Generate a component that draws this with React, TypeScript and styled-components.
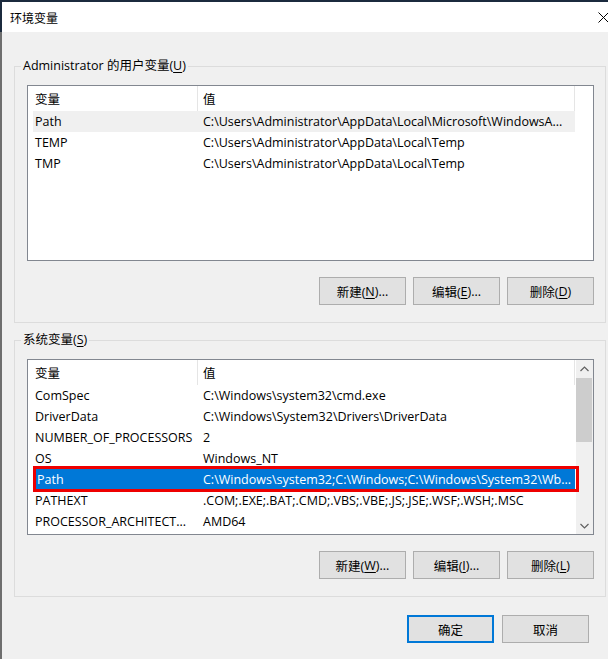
import React from 'react';
import styled, { createGlobalStyle } from 'styled-components';

const Global = createGlobalStyle`
  html, body { margin: 0; padding: 0; background: #f0f0f0; }
  body {
    font-family: "Open Sans", "Noto Sans CJK SC", sans-serif;
    font-size: 12.5px;
    color: #000;
  }
  * { box-sizing: border-box; }
`;

const Window = styled.div`
  width: 608px;
  height: 659px;
  overflow: hidden;
  display: flex;
  flex-direction: column;
  background: #f0f0f0;
  border-top: 2px solid #1b2a3e;
`;

const TitleBar = styled.div`
  height: 30px;
  flex: none;
  background: #fff;
  border-left: 2px solid #1b2a3e;
  display: flex;
  align-items: center;
  justify-content: space-between;
  padding-left: 8px;
  font-family: "Noto Sans CJK SC", sans-serif;
  font-size: 12px;
`;

const CloseIcon = styled.svg`
  width: 11px;
  height: 11px;
  margin-right: -1px;
`;

const Body = styled.div`
  flex: 1;
  display: flex;
  flex-direction: column;
  border-left: 2px solid #6e6e6e;
  padding: 0 2px 0 12px;
`;

const Group = styled.div<{ $top: number }>`
  display: flex;
  flex-direction: column;
  margin-top: ${(p) => p.$top}px;
  border: 1px solid #dcdcdc;
  padding: 0 11px 17px 12px;
`;

const Legend = styled.div`
  align-self: flex-start;
  margin: -9px 0 0 -6px;
  padding: 0 2px;
  height: 16px;
  line-height: 16px;
  background: #f0f0f0;
  white-space: nowrap;
`;

const Mn = styled.span`
  text-decoration: underline;
  text-underline-offset: 2px;
`;

const List = styled.div`
  margin-top: 11px;
  height: 176px;
  border: 1px solid #828790;
  background: #fff;
  display: flex;
  overflow: hidden;
`;

const ListContent = styled.div`
  flex: 1;
  display: flex;
  flex-direction: column;
  min-width: 0;
`;

const Header = styled.div`
  display: flex;
  height: 25px;
  flex: none;
`;

const HeaderCell = styled.div<{ $w: number; $pad: number }>`
  width: ${(p) => p.$w}px;
  padding-left: ${(p) => p.$pad}px;
  border-right: 1px solid #e5e5e5;
  display: flex;
  align-items: center;
  padding-bottom: 1px;
`;

const Row = styled.div<{ $state: 'none' | 'inactive' | 'selected' }>`
  position: relative;
  display: flex;
  align-items: center;
  height: 21px;
  width: 542px;
  margin-left: 5px;
  flex: none;
  background: ${(p) =>
    p.$state === 'selected' ? '#0078d7' : p.$state === 'inactive' ? '#f0f0f0' : 'transparent'};
  color: ${(p) => (p.$state === 'selected' ? '#fff' : '#000')};
`;

const NameCell = styled.div<{ $pad: number }>`
  width: 164px;
  flex: none;
  padding-left: ${(p) => p.$pad}px;
  white-space: nowrap;
  overflow: hidden;
`;

const ValueCell = styled.div`
  flex: 1;
  padding-left: 6px;
  white-space: nowrap;
  overflow: hidden;
`;

const Annotation = styled.div`
  position: absolute;
  left: 0;
  top: -3px;
  right: -4px;
  bottom: -2px;
  border: 3px solid #ee0000;
  pointer-events: none;
`;

const ScrollBar = styled.div`
  width: 17px;
  flex: none;
  background: #f0f0f0;
  display: flex;
  flex-direction: column;
`;

const ScrollArrow = styled.div`
  height: 17px;
  flex: none;
  display: flex;
  align-items: center;
  justify-content: center;
`;

const Track = styled.div`
  flex: 1;
  padding: 1px 1px 0 0;
`;

const Thumb = styled.div`
  height: 64px;
  background: #cdcdcd;
`;

const ButtonRow = styled.div<{ $top: number; $gap: number }>`
  display: flex;
  justify-content: flex-end;
  gap: ${(p) => p.$gap}px;
  margin-top: ${(p) => p.$top}px;
`;

const Button = styled.button<{ $default?: boolean }>`
  width: 87px;
  height: 28px;
  margin: 0;
  padding: 0;
  font: inherit;
  font-size: 12.5px;
  color: #000;
  background: #e1e1e1;
  border: ${(p) => (p.$default ? '2px solid #0078d7' : '1px solid #adadad')};
  display: flex;
  align-items: center;
  justify-content: center;
  white-space: nowrap;
`;

const Footer = styled(ButtonRow)`
  padding-right: 17px;
`;

type Item = { name: string; value: string; state?: 'none' | 'inactive' | 'selected' };

const userVars: Item[] = [
  { name: 'Path', value: 'C:\\Users\\Administrator\\AppData\\Local\\Microsoft\\WindowsA...', state: 'inactive' },
  { name: 'TEMP', value: 'C:\\Users\\Administrator\\AppData\\Local\\Temp' },
  { name: 'TMP', value: 'C:\\Users\\Administrator\\AppData\\Local\\Temp' },
];

const sysVars: Item[] = [
  { name: 'ComSpec', value: 'C:\\Windows\\system32\\cmd.exe' },
  { name: 'DriverData', value: 'C:\\Windows\\System32\\Drivers\\DriverData' },
  { name: 'NUMBER_OF_PROCESSORS', value: '2' },
  { name: 'OS', value: 'Windows_NT' },
  { name: 'Path', value: 'C:\\Windows\\system32;C:\\Windows;C:\\Windows\\System32\\Wb...', state: 'selected' },
  { name: 'PATHEXT', value: '.COM;.EXE;.BAT;.CMD;.VBS;.VBE;.JS;.JSE;.WSF;.WSH;.MSC' },
  { name: 'PROCESSOR_ARCHITECT...', value: 'AMD64' },
];

const Chevron = ({ up }: { up?: boolean }) => (
  <svg width="9" height="6" viewBox="0 0 9 6">
    <path
      d={up ? 'M0.5 5 L4.5 1 L8.5 5' : 'M0.5 1 L4.5 5 L8.5 1'}
      fill="none"
      stroke="#606060"
      strokeWidth="1.2"
    />
  </svg>
);

const VarList = ({ items, scroll }: { items: Item[]; scroll?: boolean }) => (
  <List>
    <ListContent>
      <Header>
        <HeaderCell $w={170} $pad={7}>变量</HeaderCell>
        <HeaderCell $w={377} $pad={5}>值</HeaderCell>
      </Header>
      {items.map((it) => (
        <Row key={it.name} $state={it.state ?? 'none'}>
          <NameCell $pad={it.state === 'selected' ? 4 : 2}>{it.name}</NameCell>
          <ValueCell>{it.value}</ValueCell>
          {it.state === 'selected' && <Annotation />}
        </Row>
      ))}
    </ListContent>
    {scroll && (
      <ScrollBar>
        <ScrollArrow>
          <Chevron up />
        </ScrollArrow>
        <Track>
          <Thumb />
        </Track>
        <ScrollArrow>
          <Chevron />
        </ScrollArrow>
      </ScrollBar>
    )}
  </List>
);

export default function App() {
  return (
    <>
      <Global />
      <Window>
        <TitleBar>
          <span>环境变量</span>
          <CloseIcon viewBox="0 0 11 11">
            <path d="M0.5 0.5 L10.5 10.5 M10.5 0.5 L0.5 10.5" stroke="#000" strokeWidth="1" />
          </CloseIcon>
        </TitleBar>
        <Body>
          <Group $top={34}>
            <Legend>
              Administrator 的用户变量(<Mn>U</Mn>)
            </Legend>
            <VarList items={userVars} />
            <ButtonRow $top={16} $gap={7}>
              <Button>新建(<Mn>N</Mn>)...</Button>
              <Button>编辑(<Mn>E</Mn>)...</Button>
              <Button>删除(<Mn>D</Mn>)</Button>
            </ButtonRow>
          </Group>
          <Group $top={17}>
            <Legend>
              系统变量(<Mn>S</Mn>)
            </Legend>
            <VarList items={sysVars} scroll />
            <ButtonRow $top={16} $gap={7}>
              <Button>新建(<Mn>W</Mn>)...</Button>
              <Button>编辑(<Mn>I</Mn>)...</Button>
              <Button>删除(<Mn>L</Mn>)</Button>
            </ButtonRow>
          </Group>
          <Footer $top={18} $gap={8}>
            <Button $default>确定</Button>
            <Button>取消</Button>
          </Footer>
        </Body>
      </Window>
    </>
  );
}
